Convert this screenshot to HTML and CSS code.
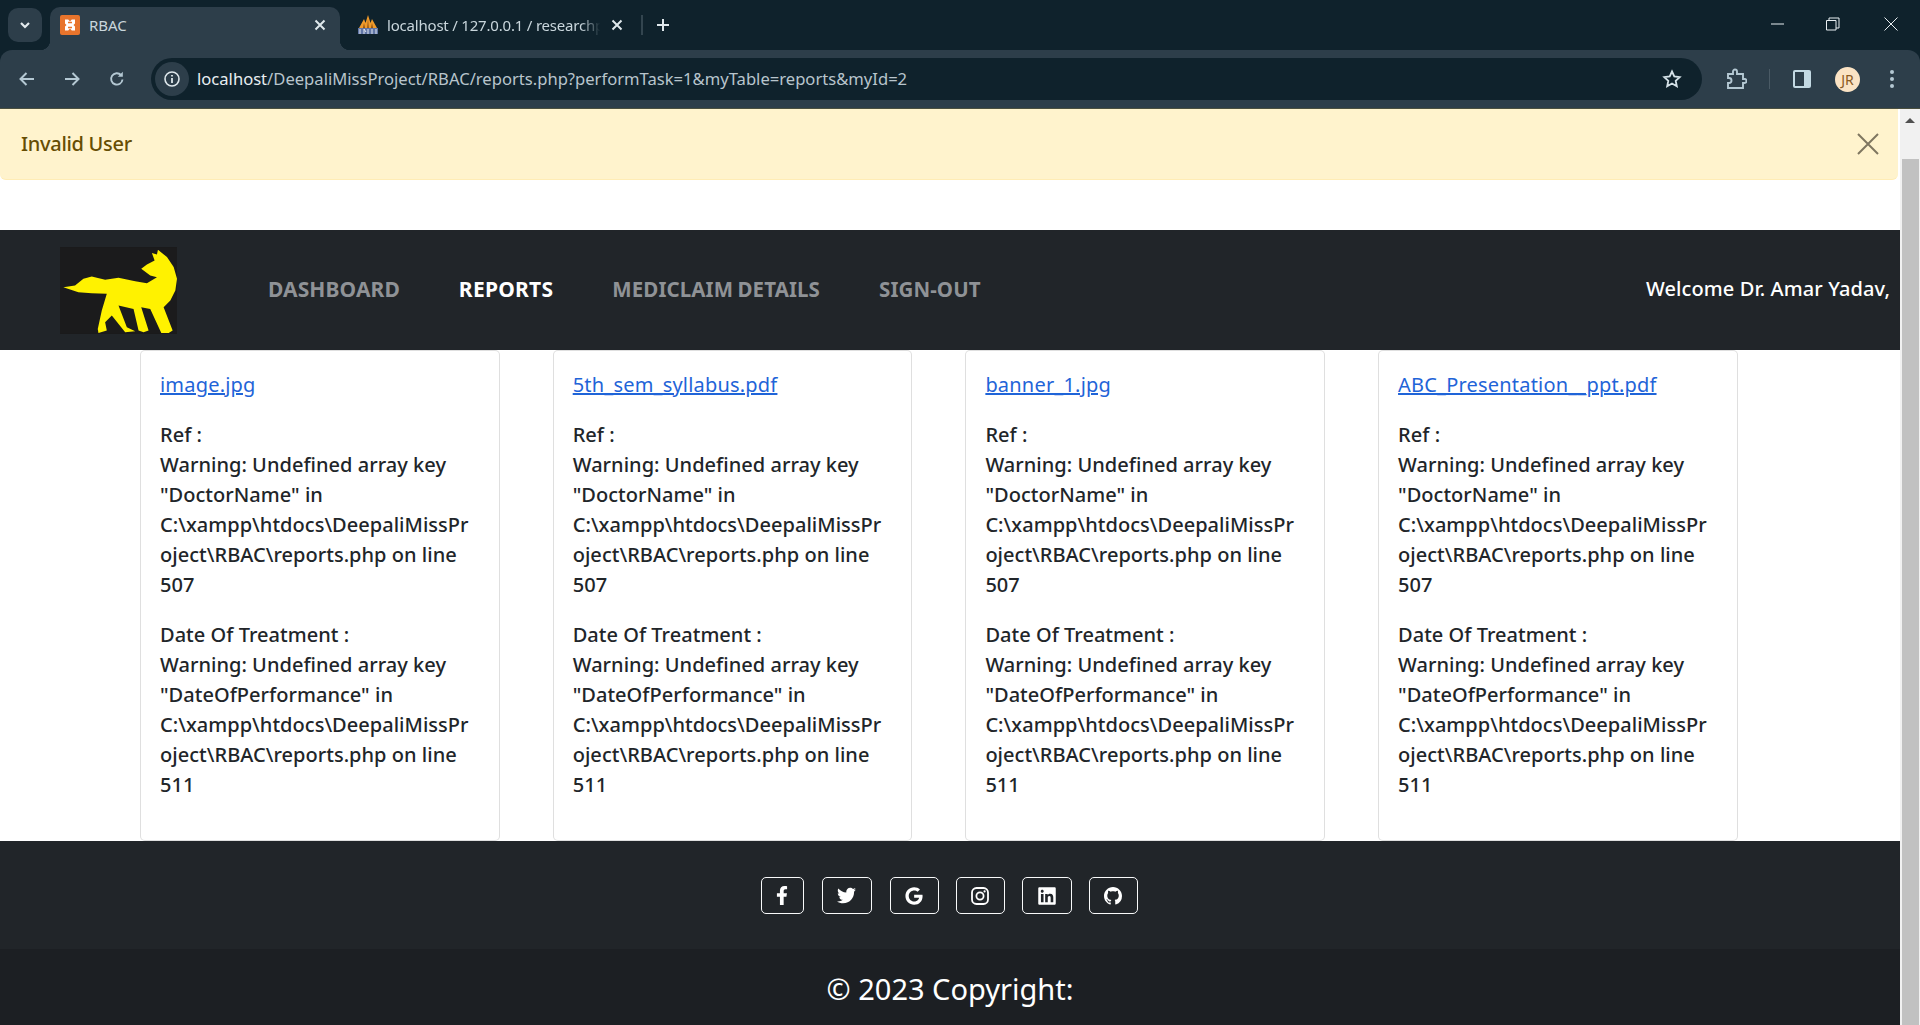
FILE: index.html
```html
<!DOCTYPE html>
<html lang="en">
<head>
<meta charset="utf-8">
<title>RBAC</title>
<link rel="stylesheet" href="styles.css">
</head>
<body>
<div class="browser">
  <div class="tabstrip">
    <button class="tabsearch"><svg width="14" height="14" viewBox="0 0 14 14"><path d="M3 5l4 4 4-4" fill="none" stroke="#e3eaee" stroke-width="2.200"/></svg></button>
    <div class="tab active">
      <svg class="favicon" width="20" height="20" viewBox="0 0 20 20"><rect width="20" height="20" rx="2" fill="#e8742c"/><path d="M5 4.500h3.200L10 6.500l1.800-2H15v4l-1.500 1.500L15 11.500v4h-3.200L10 13.500l-1.800 2H5v-4L6.500 10 5 8.500z" fill="#fff"/><path d="M8 7.500h4M8 12.500h4" stroke="#e8742c" stroke-width="1.600"/></svg>
      <span class="tabtitle">RBAC</span>
      <svg class="tabclose" width="20" height="20" viewBox="0 0 20 20"><path d="M5.500 5.500l9 9M14.500 5.500l-9 9" stroke="#dfe8ec" stroke-width="2" fill="none"/></svg>
    </div>
    <div class="tab second">
      <svg class="favicon" width="20" height="20" viewBox="0 0 20 20"><path d="M1 13 6 4l1.500 4L10 0l2.500 8L14 4l5 9z" fill="#ef9a2a"/><path d="M9.200 13 10 4l.8 9zM5 13 6 8l1 5zM13 13l1-5 1 5z" fill="#8a4f12"/><rect x="0" y="13" width="20" height="6" fill="#6176a6"/><path d="M2 19v-5M6 19v-5l2 3M10 19v-5M14 19v-5M18 19v-5" stroke="#e2e7f1" stroke-width="1" fill="none"/></svg>
      <span class="tabtitle fade narrow">localhost / 127.0.0.1 / researchp</span>
      <svg class="tabclose" width="20" height="20" viewBox="0 0 20 20"><path d="M5.500 5.500l9 9M14.500 5.500l-9 9" stroke="#dfe8ec" stroke-width="2" fill="none"/></svg>
    </div>
    <span class="tabsep"></span>
    <svg class="newtab" width="16" height="16" viewBox="0 0 16 16"><path d="M8 2v12M2 8h12" stroke="#dfe8ec" stroke-width="2" fill="none"/></svg>
    <div class="winctl">
      <svg width="14" height="14" viewBox="0 0 14 14"><path d="M0 7h13" stroke="#e8eef1" fill="none"/></svg>
      <svg width="14" height="14" viewBox="0 0 14 14"><path d="M.5 3.500h9.500v9.500H.5zM3 3.500V1h10v10h-3" stroke="#e8eef1" fill="none"/></svg>
      <svg class="winclose" width="14" height="14" viewBox="0 0 14 14"><path d="M.5.500l13 13M13.500.500l-13 13" stroke="#e8eef1" fill="none"/></svg>
    </div>
  </div>
  <div class="toolbar">
    <svg class="navicon" width="18" height="18" viewBox="0 0 18 18"><path d="M16 9H3M8.500 3 2.500 9l6 6" fill="none" stroke="#b4c8d3" stroke-width="2"/></svg>
    <svg class="navicon" width="18" height="18" viewBox="0 0 18 18"><path d="M2 9h13M9.500 3l6 6-6 6" fill="none" stroke="#b4c8d3" stroke-width="2"/></svg>
    <svg class="navicon" width="18" height="18" viewBox="0 0 18 18"><path d="M14.500 9.500A5.700 5.700 0 1 1 13 5" fill="none" stroke="#b4c8d3" stroke-width="1.900"/><path d="M14.800 1.800v5h-5z" fill="#b4c8d3"/></svg>
    <div class="omnibox">
      <span class="infochip"><svg width="18" height="18" viewBox="0 0 18 18"><circle cx="9" cy="9" r="7" fill="none" stroke="#dfe8ec" stroke-width="1.600"/><path d="M9 8v5M9 5v1.600" stroke="#dfe8ec" stroke-width="1.800"/></svg></span>
      <span class="url"><span class="urlhost">localhost</span>/DeepaliMissProject/RBAC/reports.php?performTask=1&amp;myTable=reports&amp;myId=2</span>
      <svg class="star" width="20" height="20" viewBox="0 0 20 20"><path d="m10 2.500 2.300 5 5.400.6-4 3.700 1.100 5.400-4.800-2.700-4.800 2.700 1.100-5.400-4-3.700 5.400-.6z" fill="none" stroke="#d5e2e8" stroke-width="1.800"/></svg>
    </div>
    <svg class="exticon" width="22" height="22" viewBox="0 0 22 22"><path d="M3 6h5V3.500a2 2 0 0 1 4 0V6h6v5h1.500a2 2 0 0 1 0 4H18v5H3v-5h1a2.500 2.500 0 0 0 0-5H3z" fill="none" stroke="#b4c8d3" stroke-width="1.900"/></svg>
    <span class="toolsep"></span>
    <svg class="sideicon" width="18" height="18" viewBox="0 0 18 18"><rect width="18" height="18" rx="2" fill="#c3d9e3"/><rect x="2" y="2" width="9" height="14" fill="#2d3e4a"/></svg>
    <span class="avatar">JR</span>
    <svg class="menuicon" width="6" height="20" viewBox="0 0 6 20"><circle cx="3" cy="3" r="2" fill="#b4c8d3"/><circle cx="3" cy="10" r="2" fill="#b4c8d3"/><circle cx="3" cy="17" r="2" fill="#b4c8d3"/></svg>
  </div>
</div>
<div class="viewport">
  <main class="page">
    <div class="alert">
      <span>Invalid User</span>
      <svg width="22" height="22" viewBox="0 0 22 22"><path d="M1 1l20 20M21 1 1 21" stroke="#7f7660" stroke-width="2" fill="none"/></svg>
    </div>
    <nav class="navbar">
      <svg class="logo" width="117" height="87" viewBox="15 20 350 260"><rect x="15" y="20" width="350" height="260" fill="#1b1b1c"/><path d="M25 140 60 135 85 115 110 108 150 118 190 112 240 122 275 128 305 110 285 105 258 85 275 72 298 60 290 38 305 42 308 28 335 50 355 80 365 115 360 150 345 180 325 200 352 270 340 277 318 277 285 205 258 200 280 270 265 275 250 270 235 205 190 195 215 260 240 272 210 275 170 225 150 245 155 270 130 277 128 265 140 210 155 160 110 158 70 155Z" fill="#fff200"/></svg>
      <ul class="navlinks">
        <li><a class="navlink">DASHBOARD</a></li>
        <li><a class="navlink current">REPORTS</a></li>
        <li><a class="navlink long">MEDICLAIM DETAILS</a></li>
        <li><a class="navlink long">SIGN-OUT</a></li>
      </ul>
      <span class="welcome">Welcome Dr. Amar Yadav,</span>
    </nav>
    <section class="cards">
      <article class="card">
        <p><a class="filelink">image.jpg</a></p>
        <p>Ref :<br>Warning: Undefined array key<br>"DoctorName" in<br>C:\xampp\htdocs\DeepaliMissPr<br>oject\RBAC\reports.php on line<br>507</p>
        <p>Date Of Treatment :<br>Warning: Undefined array key<br>"DateOfPerformance" in<br>C:\xampp\htdocs\DeepaliMissPr<br>oject\RBAC\reports.php on line<br>511</p>
      </article>
      <article class="card">
        <p><a class="filelink">5th_sem_syllabus.pdf</a></p>
        <p>Ref :<br>Warning: Undefined array key<br>"DoctorName" in<br>C:\xampp\htdocs\DeepaliMissPr<br>oject\RBAC\reports.php on line<br>507</p>
        <p>Date Of Treatment :<br>Warning: Undefined array key<br>"DateOfPerformance" in<br>C:\xampp\htdocs\DeepaliMissPr<br>oject\RBAC\reports.php on line<br>511</p>
      </article>
      <article class="card">
        <p><a class="filelink">banner_1.jpg</a></p>
        <p>Ref :<br>Warning: Undefined array key<br>"DoctorName" in<br>C:\xampp\htdocs\DeepaliMissPr<br>oject\RBAC\reports.php on line<br>507</p>
        <p>Date Of Treatment :<br>Warning: Undefined array key<br>"DateOfPerformance" in<br>C:\xampp\htdocs\DeepaliMissPr<br>oject\RBAC\reports.php on line<br>511</p>
      </article>
      <article class="card">
        <p><a class="filelink">ABC_Presentation__ppt.pdf</a></p>
        <p>Ref :<br>Warning: Undefined array key<br>"DoctorName" in<br>C:\xampp\htdocs\DeepaliMissPr<br>oject\RBAC\reports.php on line<br>507</p>
        <p>Date Of Treatment :<br>Warning: Undefined array key<br>"DateOfPerformance" in<br>C:\xampp\htdocs\DeepaliMissPr<br>oject\RBAC\reports.php on line<br>511</p>
      </article>
    </section>
    <footer class="footer">
      <div class="social">
        <a class="sbtn sb-f"><svg width="12" height="19" viewBox="0 0 320 512"><path fill="#fff" d="M279.14 288l14.22-92.66h-88.91v-60.13c0-25.35 12.42-50.06 52.24-50.06h40.42V6.26S260.43 0 225.36 0c-73.22 0-121.08 44.38-121.08 124.72v70.62H22.89V288h81.39v224h100.17V288z"/></svg></a>
        <a class="sbtn sb-t"><svg width="19" height="19" viewBox="0 0 512 512"><path fill="#fff" d="M459.37 151.716c.325 4.548.325 9.097.325 13.645 0 138.72-105.583 298.558-298.558 298.558-59.452 0-114.68-17.219-161.137-47.106 8.447.974 16.568 1.299 25.34 1.299 49.055 0 94.213-16.568 130.274-44.832-46.132-.975-84.792-31.188-98.112-72.772 6.498.974 12.995 1.624 19.818 1.624 9.421 0 18.843-1.3 27.614-3.573-48.081-9.747-84.143-51.98-84.143-102.985v-1.299c13.969 7.797 30.214 12.67 47.431 13.319-28.264-18.843-46.781-51.005-46.781-87.391 0-19.492 5.197-37.36 14.294-52.954 51.655 63.675 129.3 105.258 216.365 109.807-1.624-7.797-2.599-15.918-2.599-24.04 0-57.828 46.782-104.934 104.934-104.934 30.213 0 57.502 12.67 76.67 33.137 23.715-4.548 46.456-13.32 66.599-25.34-7.798 24.366-24.366 44.833-46.132 57.827 21.117-2.273 41.584-8.122 60.426-16.243-14.292 20.791-32.161 39.308-52.628 54.253z"/></svg></a>
        <a class="sbtn sb-g"><svg width="18" height="18" viewBox="0 0 488 512"><path fill="#fff" d="M488 261.8C488 403.3 391.1 504 248 504 110.8 504 0 393.2 0 256S110.8 8 248 8c66.8 0 123 24.5 166.300 64.900l-67.500 64.900C258.500 52.600 94.300 116.600 94.300 256c0 86.500 69.100 156.600 153.700 156.600 98.200 0 135-70.400 140.800-106.900H248v-85.300h236.100c2.300 12.700 3.900 24.900 3.900 41.400z"/></svg></a>
        <a class="sbtn sb-i"><svg width="18" height="18" viewBox="0 0 18 18"><rect x="1" y="1" width="16" height="16" rx="4.500" fill="none" stroke="#fff" stroke-width="1.800"/><circle cx="9" cy="9" r="3.600" fill="none" stroke="#fff" stroke-width="1.800"/><circle cx="13.600" cy="4.400" r="1.100" fill="#fff"/></svg></a>
        <a class="sbtn sb-l"><svg width="18" height="20" viewBox="0 0 448 512"><path fill="#fff" d="M416 32H31.900C14.300 32 0 46.500 0 64.300v383.400C0 465.500 14.300 480 31.900 480H416c17.600 0 32-14.500 32-32.300V64.300c0-17.800-14.400-32.300-32-32.300zM135.400 416H69V202.200h66.500V416zm-33.200-243c-21.300 0-38.500-17.300-38.500-38.500S80.900 96 102.200 96c21.200 0 38.500 17.300 38.500 38.500 0 21.300-17.200 38.500-38.500 38.500zm282.100 243h-66.400V312c0-24.800-.5-56.700-34.500-56.700-34.600 0-39.900 27-39.900 54.900V416h-66.400V202.200h63.700v29.200h.9c8.900-16.800 30.600-34.500 62.900-34.500 67.200 0 79.700 44.300 79.700 101.900V416z"/></svg></a>
        <a class="sbtn sb-h"><svg width="18" height="18" viewBox="0 0 16 16"><path fill="#fff" d="M8 0C3.580 0 0 3.580 0 8c0 3.540 2.290 6.530 5.470 7.590.4.070.55-.17.55-.38 0-.19-.01-.82-.01-1.490-2.010.37-2.530-.49-2.690-.94-.09-.23-.48-.94-.82-1.130-.28-.15-.68-.52-.01-.53.63-.01 1.080.58 1.230.82.72 1.210 1.870.87 2.330.66.070-.52.28-.87.51-1.070-1.780-.2-3.640-.89-3.640-3.950 0-.87.31-1.590.82-2.150-.08-.2-.36-1.020.08-2.120 0 0 .67-.21 2.200.82.64-.18 1.320-.27 2-.27.68 0 1.360.09 2 .27 1.530-1.040 2.200-.82 2.200-.82.44 1.100.16 1.920.08 2.120.51.56.82 1.270.82 2.150 0 3.070-1.870 3.750-3.650 3.950.29.25.54.73.54 1.480 0 1.070-.01 1.930-.01 2.200 0 .21.15.46.55.38A8.013 8.013 0 0 0 16 8c0-4.420-3.580-8-8-8z"/></svg></a>
      </div>
      <div class="copyright">© 2023 Copyright:</div>
    </footer>
  </main>
  <div class="scrollbar">
    <span class="sarrow"></span>
    <span class="sthumb"></span>
  </div>
</div>
</body>
</html>
```
FILE: styles.css
```css
* { box-sizing: border-box; }
html, body { margin: 0; height: 1025px; overflow: hidden; background: #fff; }
body { font-family: "Noto Sans", sans-serif; font-size: 20px; line-height: 30px; color: #212529; display: flex; flex-direction: column; }

.browser { flex: none; height: 109px; background: #0f222c; border-bottom: 1px solid #4a4f3f; display: flex; flex-direction: column; }
.tabstrip { height: 50px; display: flex; align-items: flex-start; padding: 7px 0 0 8px; color: #c9d6dc; flex: none; }
.tabsearch { flex: none; width: 34px; height: 34px; margin: 1px 8px 0 0; background: #2d3e4a; border: 0; border-radius: 10px; padding: 0; display: flex; align-items: center; justify-content: center; }
.tab { position: relative; flex: none; height: 43px; display: flex; align-items: center; padding: 0 10px 7px 10px; font-size: 15px; line-height: 20px; }
.tab.active { width: 290px; background: #2d3e4a; border-radius: 10px 10px 0 0; }
.tab.active::before, .tab.active::after { content: ""; position: absolute; bottom: 0; width: 10px; height: 10px; }
.tab.active::before { left: -10px; background: radial-gradient(circle at 0 0, transparent 10px, #2d3e4a 10.500px); }
.tab.active::after { right: -10px; background: radial-gradient(circle at 100% 0, transparent 10px, #2d3e4a 10.500px); }
.tab.second { width: 292px; padding: 0 5px 7px 18px; }
.favicon { flex: none; margin-right: 9px; }
.tabtitle { flex: 1; white-space: nowrap; min-width: 0; }
.narrow { letter-spacing: -0.2px; }
.fade { mask-image: linear-gradient(90deg, #000 88%, transparent 97%); }
.tabclose { flex: none; }
.tabsep { flex: none; width: 2px; height: 20px; background: #33454f; margin: 8px 0 0 9px; }
.newtab { flex: none; margin: 10px 0 0 12px; }
.winctl { margin-left: auto; display: flex; gap: 41px; padding: 10px 22px 0 0; }
.winclose { margin-left: 3px; }

.toolbar { flex: 1; background: #2d3e4a; border-radius: 12px 12px 0 0; display: flex; align-items: center; padding: 0 0 0 18px; }
.navicon { flex: none; margin-right: 27px; }
.navicon:nth-child(3) { margin-right: 25px; }
.omnibox { flex: none; width: 1551px; height: 42px; background: #0f222c; border-radius: 21px; display: flex; align-items: center; padding: 0 20px 0 4px; }
.infochip { width: 34px; height: 34px; border-radius: 50%; background: #2d3e4a; display: flex; align-items: center; justify-content: center; flex: none; margin-right: 8px; }
.url { flex: 1; font-size: 16.600px; line-height: 20px; color: #b8c5cc; white-space: nowrap; }
.urlhost { color: #e8eef1; }
.star { flex: none; }
.exticon { flex: none; margin-left: 23px; }
.toolsep { width: 1px; height: 20px; background: #4a5a65; margin: 0 23px 0 22px; flex: none; }
.sideicon { flex: none; }
.avatar { flex: none; width: 25px; height: 25px; margin-left: 24px; border-radius: 50%; background: #fbe3c4; color: #8a5a22; font-size: 14px; line-height: 25px; text-align: center; }
.menuicon { flex: none; margin-left: 29px; }

.viewport { flex: 1; display: flex; min-height: 0; }
.page { flex: 1; min-width: 0; display: flex; flex-direction: column; }
.scrollbar { flex: none; width: 20px; background: #f1f1f1; display: flex; flex-direction: column; align-items: center; }
.sarrow { width: 0; height: 0; margin: 9px 0 0; border: 5px solid transparent; border-top: 0; border-bottom: 5px solid #505050; }
.sthumb { width: 17px; flex: 1; margin-top: 36px; background: #c1c1c1; }

.alert { flex: none; height: 71px; margin: 0 2px 50px 0; background: #fff3cd; color: #664d03; font-weight: 500; letter-spacing: -0.3px; border-bottom: 1px solid #ffecb5; border-radius: 0 0 6px 6px; display: flex; align-items: center; justify-content: space-between; padding: 0 19px 1px 21px; }

.navbar { flex: none; height: 120px; background: #212529; display: flex; align-items: center; padding: 0 10px 2px 60px; }
.logo { flex: none; margin-top: 2px; }
.navlinks { list-style: none; margin: 0 0 0 91px; padding: 0; display: flex; gap: 59px; }
.navlink { color: #8f9296; font-weight: 700; font-size: 21px; letter-spacing: 0.1px; }
.navlink.long { font-size: 20.500px; word-spacing: -1px; }
.navlink.current { color: #fff; letter-spacing: 0.25px; }
.welcome { margin-left: auto; color: #fff; font-weight: 500; letter-spacing: 0.1px; }

.cards { flex: none; height: 491px; padding: 0 0 0 140px; display: flex; gap: 53.200px; }
.card { flex: none; width: 359.500px; height: 491px; background: #fff; border: 1px solid rgba(0,0,0,.125); border-radius: 5px; padding: 19px; white-space: nowrap; font-weight: 500; letter-spacing: 0.03px; }
.card p { margin: 0 0 20px; }
.filelink { color: #1f64d8; font-weight: 400; letter-spacing: 0.2px; text-decoration: underline; }

.footer { flex: 1; background: #212529; color: #fff; display: flex; flex-direction: column; }
.social { flex: none; height: 108px; display: flex; justify-content: center; align-items: flex-start; padding: 36px 2px 0 0; }
.sbtn { height: 37px; border: 1px solid #f8f9fa; border-radius: 5px; display: flex; align-items: center; justify-content: center; }
.sb-f { width: 43px; margin-right: 18px; }
.sb-t { width: 50px; margin-right: 18px; }
.sb-g { width: 49px; margin-right: 17px; }
.sb-i { width: 49px; margin-right: 17px; }
.sb-l { width: 50px; margin-right: 17px; }
.sb-h { width: 49px; }
.copyright { flex: 1; background: #1c1f23; font-size: 29px; line-height: 42px; text-align: center; padding-top: 19px; }
```
